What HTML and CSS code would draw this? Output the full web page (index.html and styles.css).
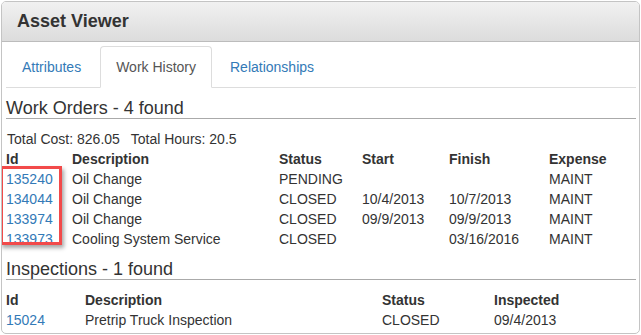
FILE: index.html
```html
<!DOCTYPE html>
<html lang="en">
  <head>
    <meta charset="UTF-8" />
    <meta name="viewport" content="width=device-width, initial-scale=1.0" />
    <title>Asset Viewer</title>
    <link rel="stylesheet" href="styles.css">
  </head>

  <body>
    <div class="panel">
      <div class="panel-header">Asset Viewer</div>

      <div class="panel-body">
        <ul class="tabs">
          <li><a href="#">Attributes</a></li>
          <li class="active"><a href="#">Work History</a></li>
          <li><a href="#">Relationships</a></li>
        </ul>

        <h3 class="section-title">Work Orders - 4 found</h3>
        <div class="totals">
          <span>Total Cost: 826.05</span>
          <span>Total Hours: 20.5</span>
        </div>

        <div class="table-wrap">
          <table class="grid">
            <colgroup>
              <col style="width: 66px">
              <col style="width: 207px">
              <col style="width: 83px">
              <col style="width: 87px">
              <col style="width: 100px">
              <col>
            </colgroup>
            <tr>
              <th>Id</th>
              <th>Description</th>
              <th>Status</th>
              <th>Start</th>
              <th>Finish</th>
              <th>Expense</th>
            </tr>
            <tr>
              <td><a href="#">135240</a></td>
              <td>Oil Change</td>
              <td>PENDING</td>
              <td></td>
              <td></td>
              <td>MAINT</td>
            </tr>
            <tr>
              <td><a href="#">134044</a></td>
              <td>Oil Change</td>
              <td>CLOSED</td>
              <td>10/4/2013</td>
              <td>10/7/2013</td>
              <td>MAINT</td>
            </tr>
            <tr>
              <td><a href="#">133974</a></td>
              <td>Oil Change</td>
              <td>CLOSED</td>
              <td>09/9/2013</td>
              <td>09/9/2013</td>
              <td>MAINT</td>
            </tr>
            <tr>
              <td><a href="#">133973</a></td>
              <td>Cooling System Service</td>
              <td>CLOSED</td>
              <td></td>
              <td>03/16/2016</td>
              <td>MAINT</td>
            </tr>
          </table>
          <!-- highlight drawn over the id column -->
          <div class="marker"></div>
        </div>

        <h3 class="section-title">Inspections - 1 found</h3>
        <table class="grid">
          <colgroup>
            <col style="width: 79px">
            <col style="width: 297px">
            <col style="width: 112px">
            <col>
          </colgroup>
          <tr>
            <th>Id</th>
            <th>Description</th>
            <th>Status</th>
            <th>Inspected</th>
          </tr>
          <tr>
            <td><a href="#">15024</a></td>
            <td>Pretrip Truck Inspection</td>
            <td>CLOSED</td>
            <td>09/4/2013</td>
          </tr>
        </table>
      </div>
    </div>
  </body>
</html>
```

FILE: styles.css
```css
body {
  margin: 1px;
  font-family: "Liberation Sans", Arial, Helvetica, sans-serif;
  font-size: 14px;
  line-height: 20px;
  color: #333;
  background-color: #fff;
}

a {
  color: #337ab7;
  text-decoration: none;
}

.panel {
  height: 333px;
  box-sizing: border-box;
  border: 1px solid #c4c4c4;
  border-radius: 5px;
  overflow: hidden;
}

.panel-header {
  height: 39px;
  padding-left: 15px;
  line-height: 39px;
  font-size: 18px;
  font-weight: bold;
  color: #333;
  background: linear-gradient(#f1f1f1, #dcdcdc);
  border-bottom: 1px solid #bcbcbc;
}

.panel-body {
  padding: 4px 3px 2px 4px;
}

.tabs {
  display: flex;
  margin: 0;
  padding: 0;
  list-style: none;
  border-bottom: 1px solid #ddd;
}

.tabs li {
  margin-right: 2px;
  margin-bottom: -1px;
}

.tabs li:first-child {
  margin-right: 3px;
}

.tabs a {
  display: block;
  padding: 10px 15px;
  border: 1px solid transparent;
  border-radius: 4px 4px 0 0;
}

.tabs .active a {
  color: #555;
  background-color: #fff;
  border-color: #ddd #ddd transparent;
}

.section-title {
  margin: 10px 0 0;
  font-size: 18px;
  font-weight: normal;
  line-height: 20px;
  border-bottom: 1px solid #aaa;
}

.totals {
  margin-top: 10px;
  padding-left: 1px;
}

.totals span + span {
  margin-left: 7px;
}

.table-wrap {
  position: relative;
}

.grid {
  width: 100%;
  border-collapse: collapse;
  table-layout: fixed;
}

.section-title + .grid {
  margin-top: 10px;
}

.grid th,
.grid td {
  padding: 0;
  text-align: left;
  white-space: nowrap;
}

.marker {
  position: absolute;
  left: -6px;
  top: 17px;
  width: 62px;
  height: 79px;
  box-sizing: border-box;
  border: 3px solid #f24a4a;
  box-shadow: 2px 3px 4px rgba(0, 0, 0, 0.35);
}
```
